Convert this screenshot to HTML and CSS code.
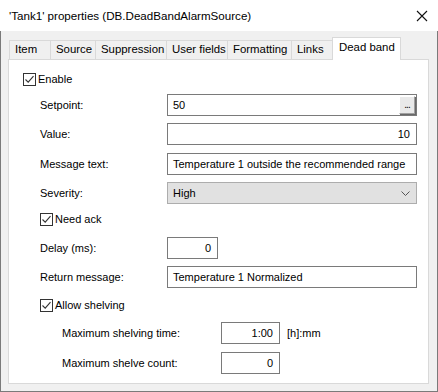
FILE: index.html
```html
<!DOCTYPE html>
<html lang="en">
  <head>
    <meta charset="utf-8" />
    <link rel="stylesheet" href="styles.css">
    <title>'Tank1' properties</title>
  </head>
  <body>
    <div class="window">
      <header class="titlebar">
        <span class="title">'Tank1' properties (DB.DeadBandAlarmSource)</span>
        <svg class="close" width="12" height="12" viewBox="0 0 12 12">
          <path d="M1 1 L11 11 M11 1 L1 11" stroke="#111" stroke-width="1.1" fill="none" />
        </svg>
      </header>
      <div class="dialog">
        <ul class="tabs">
          <li class="t-item">Item</li>
          <li class="t-source">Source</li>
          <li class="t-supp">Suppression</li>
          <li class="t-user">User fields</li>
          <li class="t-format">Formatting</li>
          <li class="t-links">Links</li>
          <li class="active">Dead band</li>
        </ul>
        <section class="panel">
          <label class="check">
            <span class="box"><svg width="11" height="11" viewBox="0 0 11 11"><path d="M1.5 5.5 L4.2 8.2 L9.5 2.2" stroke="#333" stroke-width="1.1" fill="none" /></svg></span>
            Enable
          </label>
          <div class="group">
            <div class="field f-setpoint">
              <span class="label">Setpoint:</span>
              <div class="input has-btn">50<span class="dots">...</span></div>
            </div>
            <div class="field f-value">
              <span class="label">Value:</span>
              <div class="input num">10</div>
            </div>
            <div class="field f-message">
              <span class="label">Message text:</span>
              <div class="input">Temperature 1 outside the recommended range</div>
            </div>
            <div class="field f-severity">
              <span class="label">Severity:</span>
              <div class="select">High
                <svg width="9" height="5" viewBox="0 0 9 5"><path d="M0.5 0.5 L4.5 4.5 L8.5 0.5" stroke="#555" fill="none" /></svg>
              </div>
            </div>
            <label class="check c-ack">
              <span class="box"><svg width="11" height="11" viewBox="0 0 11 11"><path d="M1.5 5.5 L4.2 8.2 L9.5 2.2" stroke="#333" stroke-width="1.1" fill="none" /></svg></span>
              Need ack
            </label>
            <div class="field f-delay">
              <span class="label">Delay (ms):</span>
              <div class="input num short">0</div>
            </div>
            <div class="field f-return">
              <span class="label">Return message:</span>
              <div class="input">Temperature 1 Normalized</div>
            </div>
            <label class="check c-shelve">
              <span class="box"><svg width="11" height="11" viewBox="0 0 11 11"><path d="M1.5 5.5 L4.2 8.2 L9.5 2.2" stroke="#333" stroke-width="1.1" fill="none" /></svg></span>
              Allow shelving
            </label>
            <div class="sub">
              <div class="field f-time">
                <span class="label">Maximum shelving time:</span>
                <div class="input num mid">1:00</div>
                <span class="unit">[h]:mm</span>
              </div>
              <div class="field f-count">
                <span class="label">Maximum shelve count:</span>
                <div class="input num mid">0</div>
              </div>
            </div>
          </div>
        </section>
      </div>
    </div>
  </body>
</html>
```

FILE: styles.css
```css
* {
  box-sizing: border-box;
}

html {
  font-family: "Liberation Sans", Arial, sans-serif;
  font-size: 11px;
  color: #000;
}

body {
  margin: 0;
}

.window {
  width: 438px;
  height: 392px;
  display: flex;
  flex-direction: column;
  background: #fff;
}

/* Title bar */
.titlebar {
  height: 31px;
  display: flex;
  align-items: center;
  justify-content: space-between;
  padding: 0 10px 0 9px;
  background: #fff;
  font-size: 11.6px;
}

/* Dialog body */
.dialog {
  flex: 1;
  display: flex;
  flex-direction: column;
  background: #f0f0f0;
  border: 1px solid #7a7a7a;
  border-top: none;
  padding: 6px 8px 7px 7px;
}

.tabs {
  list-style: none;
  margin: 0 0 0 1px;
  padding: 0;
  display: flex;
  align-items: flex-end;
  height: 22px;
  font-size: 11.4px;

  & li {
    height: 19px;
    padding: 2px 0 0 5px;
    margin-right: -1px;
    border: 1px solid #d9d9d9;
    border-bottom: none;
    background: #f0f0f0;
    white-space: nowrap;
    overflow: hidden;
  }

  & .t-item { width: 42px; }
  & .t-source { width: 46px; }
  & .t-supp { width: 72px; }
  & .t-user { width: 62px; }
  & .t-format { width: 65px; }
  & .t-links { width: 44px; }

  & li.active {
    position: relative;
    z-index: 1;
    width: 69px;
    height: 23px;
    margin: 0 0 -1px -2px;
    padding: 3px 0 0 6px;
    background: #fff;
  }
}

.panel {
  flex: 1;
  background: #fff;
  border: 1px solid #d9d9d9;
  padding: 12px 11px 0 14px;
}

/* Checkboxes */
.check {
  display: flex;
  align-items: center;
  gap: 2px;
  height: 14px;

  & .box {
    width: 13px;
    height: 13px;
    border: 1px solid #333;
    background: #fff;
    display: flex;
    align-items: center;
    justify-content: center;
  }
}

.group {
  padding-left: 17px;
}

.c-ack {
  margin-top: 8px;
}

.c-shelve {
  margin-top: 10px;
}

/* Field rows */
.field {
  display: flex;
  align-items: center;
  height: 22px;

  & .label {
    width: 127px;
    flex: none;
  }
}

.f-setpoint {
  margin-top: 8px;
}

.f-value,
.f-severity,
.f-return {
  margin-top: 7px;
}

.f-message {
  margin-top: 8px;
}

.f-delay {
  margin-top: 11px;
}

.sub {
  padding-left: 22px;
  margin-top: 10px;

  & .label {
    width: 159px;
  }
}

.f-count {
  margin-top: 8px;
}

.input {
  position: relative;
  flex: 1;
  min-width: 0;
  overflow: hidden;
  height: 22px;
  border: 1px solid #7a7a7a;
  background: #fff;
  padding: 0 5px;
  display: flex;
  align-items: center;
  white-space: nowrap;

  &.num {
    justify-content: flex-end;
    padding-right: 6px;
  }

  &.short {
    flex: none;
    width: 51px;
  }

  &.mid {
    flex: none;
    width: 59px;
  }
}

.dots {
  position: absolute;
  right: 1px;
  top: 1px;
  width: 16px;
  height: 18px;
  background: #e9e9e9;
  border: 1px solid;
  border-color: #fff #a0a0a0 #a0a0a0 #fff;
  box-shadow: 1px 1px 0 #696969;
  font-size: 10px;
  line-height: 16px;
  text-align: center;
  letter-spacing: -1px;
}

.select {
  flex: 1;
  height: 22px;
  background: #e1e1e1;
  border: 1px solid #adadad;
  padding: 0 6px 0 5px;
  display: flex;
  align-items: center;
  justify-content: space-between;
}

.unit {
  margin-left: 7px;
}
```
